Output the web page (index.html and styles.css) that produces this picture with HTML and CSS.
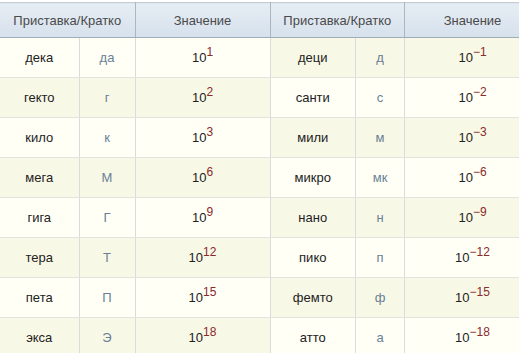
FILE: index.html
```html
<!DOCTYPE html>
<html>
<head>
    <title>Приставки СИ</title>
    <link rel="stylesheet" href="styles.css">
</head>
<body>
    <div class="prefixes">
        <table class="prefix-table left">
            <colgroup>
                <col class="c-name-l"><col class="c-short-l"><col class="c-value-l">
            </colgroup>
            <tr>
                <th colspan="2">Приставка/Кратко</th>
                <th>Значение</th>
            </tr>
            <tr class="odd"><td>дека</td><td class="short">да</td><td>10<sup>1</sup></td></tr>
            <tr class="even"><td>гекто</td><td class="short">г</td><td>10<sup>2</sup></td></tr>
            <tr class="odd"><td>кило</td><td class="short">к</td><td>10<sup>3</sup></td></tr>
            <tr class="even"><td>мега</td><td class="short">М</td><td>10<sup>6</sup></td></tr>
            <tr class="odd"><td>гига</td><td class="short">Г</td><td>10<sup>9</sup></td></tr>
            <tr class="even"><td>тера</td><td class="short">Т</td><td>10<sup>12</sup></td></tr>
            <tr class="odd"><td>пета</td><td class="short">П</td><td>10<sup>15</sup></td></tr>
            <tr class="even"><td>экса</td><td class="short">Э</td><td>10<sup>18</sup></td></tr>
        </table>
        <table class="prefix-table right">
            <colgroup>
                <col class="c-name-r"><col class="c-short-r"><col class="c-value-r">
            </colgroup>
            <tr>
                <th colspan="2">Приставка/Кратко</th>
                <th>Значение</th>
            </tr>
            <tr class="even"><td>деци</td><td class="short">д</td><td>10<sup>&minus;1</sup></td></tr>
            <tr class="odd"><td>санти</td><td class="short">с</td><td>10<sup>&minus;2</sup></td></tr>
            <tr class="even"><td>мили</td><td class="short">м</td><td>10<sup>&minus;3</sup></td></tr>
            <tr class="odd"><td>микро</td><td class="short">мк</td><td>10<sup>&minus;6</sup></td></tr>
            <tr class="even"><td>нано</td><td class="short">н</td><td>10<sup>&minus;9</sup></td></tr>
            <tr class="odd"><td>пико</td><td class="short">п</td><td>10<sup>&minus;12</sup></td></tr>
            <tr class="even"><td>фемто</td><td class="short">ф</td><td>10<sup>&minus;15</sup></td></tr>
            <tr class="odd"><td>атто</td><td class="short">а</td><td>10<sup>&minus;18</sup></td></tr>
        </table>
    </div>
</body>
</html>
```

FILE: styles.css
```css
body {
    margin: 0;
    padding-top: 2px;
    background-color: #ffffff;
    font-family: Arial, "Liberation Sans", sans-serif;
    font-size: 13px;
    color: #222222;
}

.prefixes {
    display: flex;
    width: 540px;
}

.prefix-table {
    border-collapse: collapse;
    table-layout: fixed;
}

.prefix-table.left {
    width: 270px;
}

.prefix-table.right {
    width: 270px;
}

.c-name-l { width: 79px; }
.c-short-l { width: 56px; }
.c-value-l { width: 135px; }
.c-name-r { width: 85px; }
.c-short-r { width: 49px; }
.c-value-r { width: 136px; }

.prefix-table th {
    height: 34px;
    padding: 0;
    font-weight: normal;
    color: #4a4a4a;
    background: linear-gradient(#e6edf4, #d6e1ec);
    border-top: 1px solid #c4ccd4;
    border-right: 1px solid #a9b6c3;
    border-bottom: 1px solid #a0adba;
}

.prefix-table td {
    height: 39px;
    padding: 0;
    text-align: center;
    border-right: 1px solid #d8dcdc;
    border-bottom: 1px solid #e2e4e0;
}

.prefix-table.left td:first-child,
.prefix-table.left th:first-child {
    border-left: none;
}

.odd td {
    background-color: #fffff6;
}

.even td {
    background-color: #f8f8e6;
}

/* Short symbol column */
.short {
    color: #6a7f96;
}

sup {
    font-size: 12px;
    color: #8a2a2a;
    vertical-align: 6px;
    line-height: 0;
}
```
